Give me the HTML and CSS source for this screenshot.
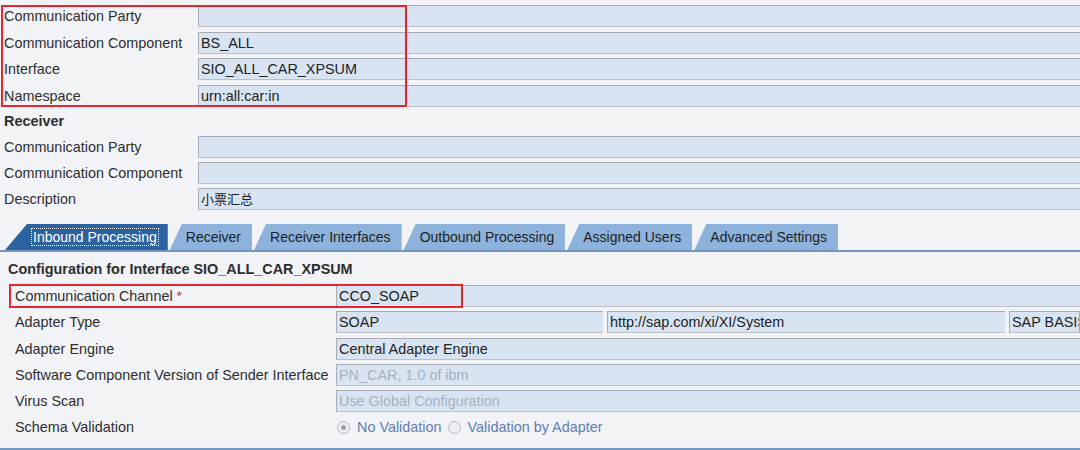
FILE: index.html
```html
<!DOCTYPE html>
<html lang="en">
<head>
  <meta charset="UTF-8" />
  <title>Integrated Configuration</title>
  <link rel="stylesheet" href="styles.css">
</head>
<body>
  <div class="page">
    <section class="form sender">
      <div class="mark mark-sender" aria-hidden="true"></div>
      <div class="row"><span class="label">Communication Party</span><div class="field"></div></div>
      <div class="row"><span class="label">Communication Component</span><div class="field">BS_ALL</div></div>
      <div class="row"><span class="label">Interface</span><div class="field">SIO_ALL_CAR_XPSUM</div></div>
      <div class="row"><span class="label">Namespace</span><div class="field">urn:all:car:in</div></div>
    </section>

    <h3 class="group">Receiver</h3>
    <section class="form receiver">
      <div class="row"><span class="label">Communication Party</span><div class="field"></div></div>
      <div class="row"><span class="label">Communication Component</span><div class="field"></div></div>
      <div class="row"><span class="label">Description</span><div class="field cjk">小票汇总</div></div>
    </section>

    <nav class="tabs">
      <div class="tab active"><span class="focus">Inbound Processing</span></div>
      <div class="tab">Receiver</div>
      <div class="tab">Receiver Interfaces</div>
      <div class="tab">Outbound Processing</div>
      <div class="tab">Assigned Users</div>
      <div class="tab">Advanced Settings</div>
    </nav>

    <div class="panel">
      <h3 class="panel-title">Configuration for Interface SIO_ALL_CAR_XPSUM</h3>
      <section class="form config">
        <div class="mark mark-channel" aria-hidden="true"></div>
        <div class="row"><span class="label">Communication Channel <em class="req">*</em></span><div class="field">CCO_SOAP</div></div>
        <div class="row">
          <span class="label">Adapter Type</span>
          <div class="fields">
            <div class="field f-type">SOAP</div>
            <div class="field f-ns">http://sap.com/xi/XI/System</div>
            <div class="field f-swc">SAP BASIS</div>
          </div>
        </div>
        <div class="row"><span class="label">Adapter Engine</span><div class="field">Central Adapter Engine</div></div>
        <div class="row"><span class="label">Software Component Version of Sender Interface</span><div class="field disabled">PN_CAR, 1.0 of ibm</div></div>
        <div class="row"><span class="label">Virus Scan</span><div class="field disabled">Use Global Configuration</div></div>
        <div class="row">
          <span class="label">Schema Validation</span>
          <div class="radios">
            <span class="radio checked"></span><span class="opt">No Validation</span>
            <span class="radio"></span><span class="opt">Validation by Adapter</span>
          </div>
        </div>
      </section>
    </div>
  </div>
</body>
</html>
```

FILE: styles.css
```css
body, html {
  margin: 0;
  padding: 0;
  height: 100%;
  background: #f2f3f7;
  font-family: "Liberation Sans", Arial, "Noto Sans CJK SC", sans-serif;
  font-size: 14.4px;
  color: #2e2e2e;
  overflow: hidden;
}

.page {
  padding-top: 5px;
  height: 450px;
  box-sizing: border-box;
  border-bottom: 2px solid #7398c6;
}

.form {
  position: relative;
  display: flex;
  flex-direction: column;
}

.row {
  display: grid;
  grid-template-columns: var(--label-w) 1fr;
  align-items: center;
  height: 22px;
  white-space: nowrap;
}

.sender, .receiver {
  --label-w: 194px;
  padding-left: 4px;
}

.sender { gap: 4.67px; }
.receiver { gap: 4px; }

.field {
  height: 22px;
  box-sizing: border-box;
  background: #d8e4f2;
  border: 1px solid #a9adb3;
  border-bottom-color: #bcc0c7;
  border-right: none;
  padding: 0 2px;
  line-height: 20px;
  white-space: nowrap;
  overflow: hidden;
  color: #222;
}

.field.disabled { color: #a9b0bb; }

.cjk { font-family: "Noto Sans CJK SC", sans-serif; font-size: 13px; }

.group {
  margin: 6px 0 6px 4px;
  font-size: 14.4px;
  height: 17px;
  line-height: 17px;
}

.mark {
  position: absolute;
  border: 2px solid #e62530;
  pointer-events: none;
  z-index: 2;
}

.mark-sender {
  left: 1px;
  top: 0;
  width: 402px;
  height: 98px;
}

.mark-channel {
  left: 0;
  top: -1px;
  width: 450px;
  height: 20px;
}

/* tab strip */
.tabs {
  display: flex;
  margin-top: 14px;
  height: 26px;
  border-bottom: 2px solid #7497c2;
  padding-left: 5px;
  font-size: 14px;
}

.tab {
  height: 26px;
  line-height: 26px;
  padding: 0 11px 0 16px;
  margin-left: 2px;
  background: #8db2dc;
  color: #222;
  clip-path: polygon(12px 0, 100% 0, 100% 100%, 0 100%);
  white-space: nowrap;
}

.tab.active {
  margin-left: 0;
  padding: 0 10px 0 27px;
  background: #2c62a0;
  color: #fff;
  clip-path: polygon(22px 0, 100% 0, 100% 100%, 0 100%);
}

.focus {
  outline: 1px dotted #fff;
  outline-offset: 0;
  padding: 0 1px;
}

.panel {
  padding-left: 9px;
}

.panel-title {
  margin: 9px 0 7px -1px;
  font-size: 14.4px;
  height: 17px;
  line-height: 17px;
}

.config {
  --label-w: 321px;
  padding-left: 6px;
  gap: 4.3px;
}

.req { font-style: normal; color: #d9302c; }

.fields {
  display: grid;
  grid-template-columns: 267px 398px 1fr;
  gap: 4px;
}

.f-swc { border-right: 1px solid #a9adb3; }

.radios {
  display: flex;
  align-items: center;
  padding-left: 1px;
  color: #5d80b6;
}

.radio {
  width: 11px;
  height: 11px;
  border: 1px solid #b3b8bf;
  border-radius: 50%;
  background: #eceef1;
  position: relative;
  margin-right: 7px;
}

.radio.checked::after {
  content: "";
  position: absolute;
  left: 3px;
  top: 3px;
  width: 5px;
  height: 5px;
  border-radius: 50%;
  background: #9aa0a8;
}

.opt { margin-right: 6px; }
```
